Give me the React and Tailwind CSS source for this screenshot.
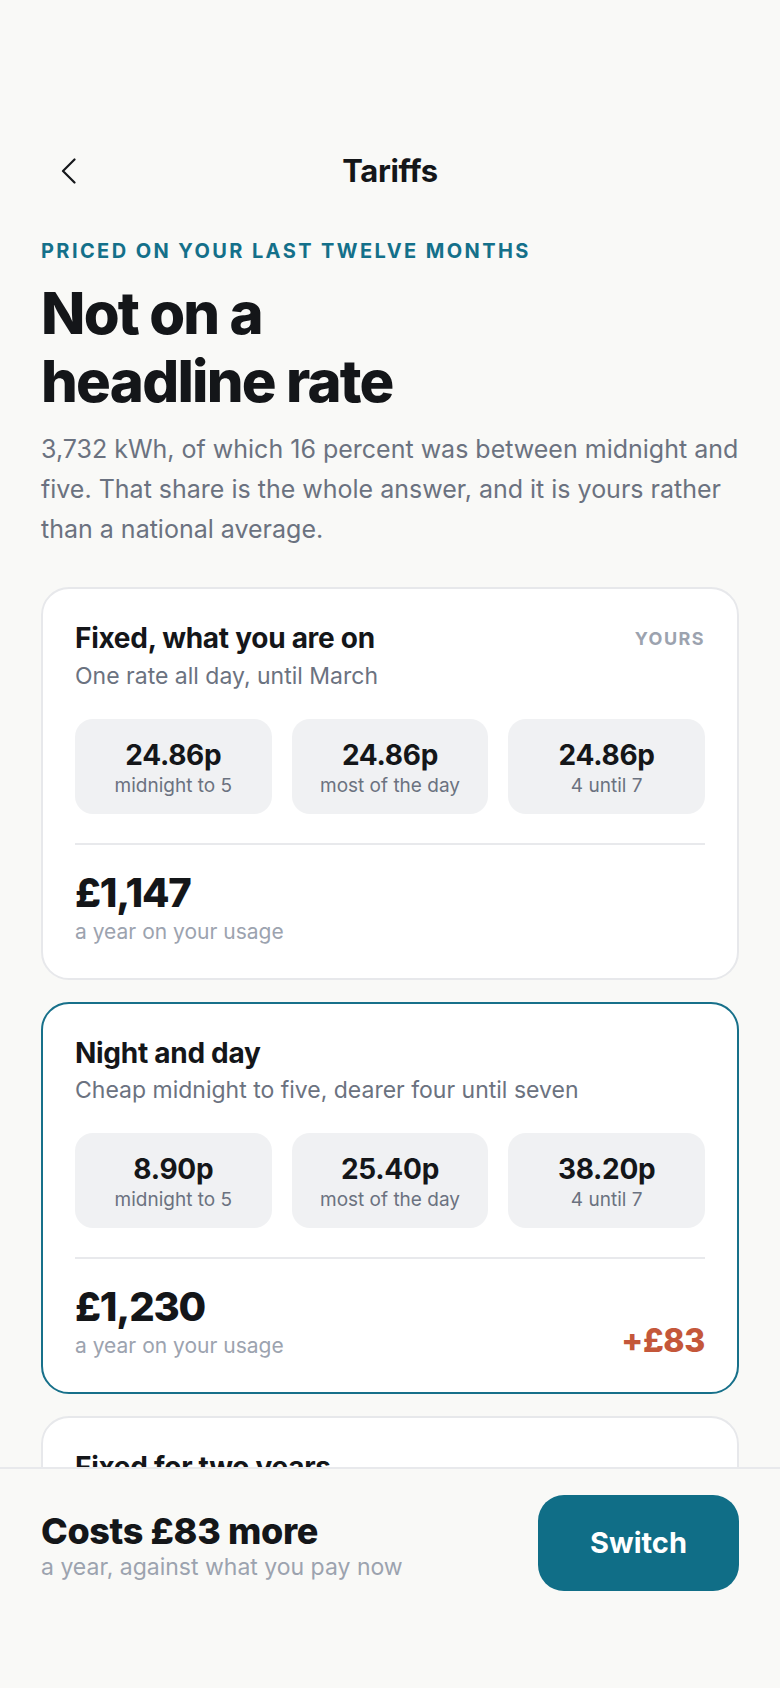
import React from "react";

const tariffs = [
  {
    id: "fixed",
    name: "Fixed, what you are on",
    blurb: "One rate all day, until March",
    yours: true,
    rates: [
      { price: "24.86p", when: "midnight to 5" },
      { price: "24.86p", when: "most of the day" },
      { price: "24.86p", when: "4 until 7" },
    ],
    total: "£1,147",
  },
  {
    id: "night",
    name: "Night and day",
    blurb: "Cheap midnight to five, dearer four until seven",
    selected: true,
    rates: [
      { price: "8.90p", when: "midnight to 5" },
      { price: "25.40p", when: "most of the day" },
      { price: "38.20p", when: "4 until 7" },
    ],
    total: "£1,230",
    diff: "+£83",
  },
];

const BackIcon = () => (
  <svg width="15" height="26" viewBox="0 0 15 26" fill="none">
    <path
      d="M13.5 1.5 L2 13 L13.5 24.5"
      stroke="#16181b"
      strokeWidth="2.2"
      strokeLinecap="round"
      strokeLinejoin="round"
    />
  </svg>
);

const TariffCard = ({ t }) => (
  <div
    className={
      t.selected
        ? "rounded-[28px] border-2 border-[#17708a] bg-white px-8 pt-[31px] pb-[31px]"
        : "rounded-[28px] border-2 border-[#e7e8eb] bg-white px-8 pt-[31px] pb-[31px]"
    }
  >
    <div className="flex items-start justify-between">
      <h3 className="text-[28px] leading-[36px] font-bold tracking-[-0.01em]">{t.name}</h3>
      {t.yours && (
        <span className="mt-[1px] text-[18px] leading-[36px] font-bold tracking-[0.08em] text-[#9ca3af]">
          YOURS
        </span>
      )}
    </div>
    <p className="mt-[3px] text-[23px] leading-[32px] text-[#6b7280]">{t.blurb}</p>

    {/* rates */}
    <div className="mt-[27px] grid grid-cols-3 gap-5">
      {t.rates.map((r, i) => (
        <div
          key={i}
          className="h-[95px] rounded-[18px] bg-[#f0f1f3] flex flex-col items-center pt-[20px]"
        >
          <span className="text-[28px] leading-[32px] font-bold tracking-[-0.01em]">{r.price}</span>
          <span className="mt-[2px] text-[19px] leading-[26px] text-[#6b7280]">{r.when}</span>
        </div>
      ))}
    </div>

    <div className="mt-[29px] h-[2px] bg-[#e8e9ec]" />

    <div className="mt-[26px] flex items-end justify-between">
      <div>
        <div className="text-[40px] leading-[44px] font-extrabold tracking-[-0.03em]">{t.total}</div>
        <div className="mt-[2px] text-[21px] leading-[30px] text-[#9ca3af]">a year on your usage</div>
      </div>
      {t.diff && (
        <div className="text-[32px] leading-[40px] font-extrabold tracking-[-0.01em] text-[#c4573a]">
          {t.diff}
        </div>
      )}
    </div>
  </div>
);

export default function App() {
  return (
    <div className="h-[1688px] flex flex-col bg-[#f9f9f7] text-[#141619] font-['Inter','Liberation_Sans',sans-serif] overflow-hidden">
      <main className="flex-1 min-h-0 overflow-hidden px-[41px] pt-[143px]">
        {/* header */}
        <header className="h-14 flex items-center">
          <div className="w-[110px] pl-[20px] flex items-center">
            <button className="flex items-center">
              <BackIcon />
            </button>
          </div>
          <h1 className="flex-1 text-center text-[31px] font-bold tracking-[-0.01em]">Tariffs</h1>
          <div className="w-[110px]" />
        </header>

        <p className="mt-[38px] text-[20px] leading-[28px] font-bold tracking-[0.12em] text-[#14708a]">
          PRICED ON YOUR LAST TWELVE MONTHS
        </p>
        <h2 className="mt-[14px] text-[58px] leading-[68px] font-extrabold tracking-[-0.03em]">
          Not on a<br />headline rate
        </h2>
        <p className="mt-[14px] text-[25px] leading-[40px] text-[#6b7280]">
          3,732 kWh, of which 16 percent was between midnight and five. That share is the whole
          answer, and it is yours rather than a national average.
        </p>

        <div className="mt-[38px] flex flex-col gap-[22px]">
          {tariffs.map((t) => (
            <TariffCard key={t.id} t={t} />
          ))}
          <div className="rounded-[28px] border-2 border-[#e7e8eb] bg-white px-8 pt-[31px] pb-[31px] h-[392px]">
            <h3 className="text-[28px] leading-[36px] font-bold tracking-[-0.01em]">Fixed for two years</h3>
          </div>
        </div>
      </main>

      {/* bottom bar */}
      <footer className="h-[221px] shrink-0 border-t-2 border-[#e8e9ec] bg-[#f9f9f7] px-[41px] pt-[26px]">
        <div className="h-24 flex items-center justify-between">
          <div className="pt-[7px]">
            <div className="text-[36px] leading-[40px] font-extrabold tracking-[-0.01em]">Costs £83 more</div>
            <div className="text-[23px] leading-[32px] text-[#9ca3af]">a year, against what you pay now</div>
          </div>
          <button className="w-[201px] h-24 rounded-[26px] bg-[#106e87] text-white text-[29px] font-bold">
            Switch
          </button>
        </div>
      </footer>
    </div>
  );
}
